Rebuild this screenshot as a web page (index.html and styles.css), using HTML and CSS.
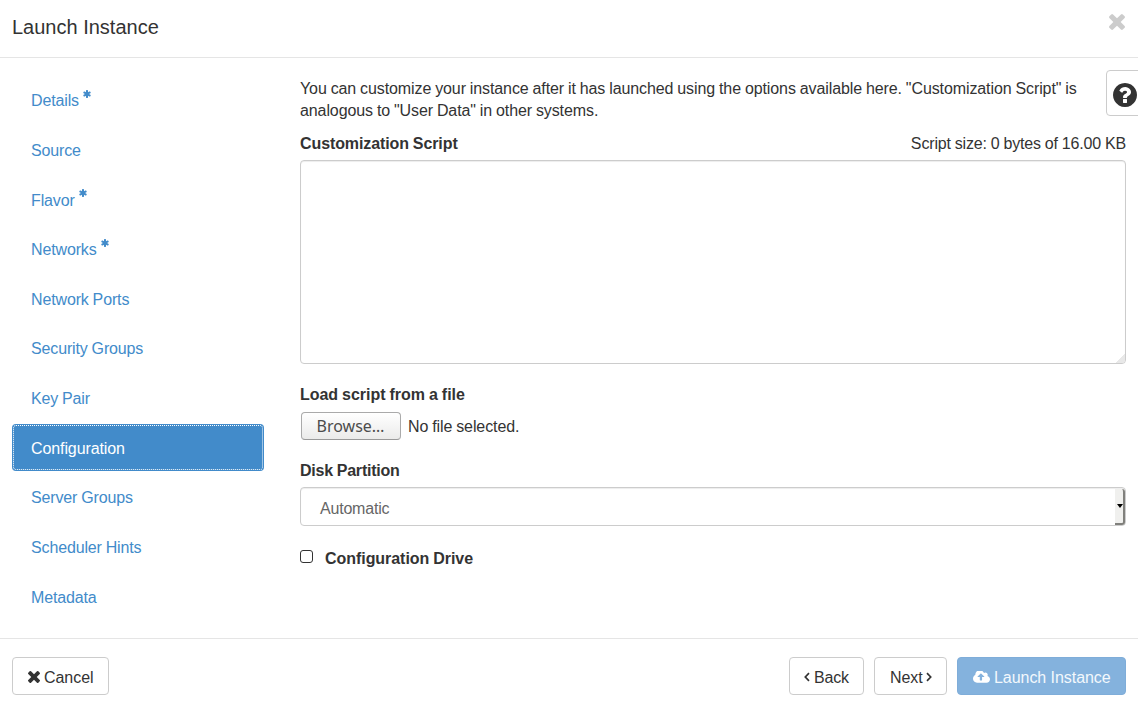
FILE: index.html
```
<!DOCTYPE html>
<html lang="en">
<head>
<meta charset="utf-8">
<title>Launch Instance</title>
<link rel="stylesheet" href="styles.css">
</head>
<body>
<svg class="sprite" aria-hidden="true">
  <symbol id="times" viewBox="110 -1170 1188 1188"><path transform="scale(1 -1)" d="M1298 214q0 -40 -28 -68l-136 -136q-28 -28 -68 -28t-68 28l-294 294l-294 -294q-28 -28 -68 -28t-68 28l-136 136q-28 28 -28 68t28 68l294 294l-294 294q-28 28 -28 68t28 68l136 136q28 28 68 28t68 -28l294 -294l294 294q28 28 68 28t68 -28l136 -136q28 -28 28 -68t-28 -68l-294 -294l294 -294q28 -28 28 -68z"/></symbol>
  <symbol id="asterisk" viewBox="106 -1408 1452 1536"><path transform="scale(1 -1)" d="M1482 486q46 -26 59.5 -77.5t-12.5 -97.5l-64 -110q-26 -46 -77.5 -59.5t-97.5 12.5l-266 153v-307q0 -52 -38 -90t-90 -38h-128q-52 0 -90 38t-38 90v307l-266 -153q-46 -26 -97.5 -12.5t-77.5 59.5l-64 110q-26 46 -12.5 97.5t59.5 77.5l266 154l-266 154q-46 26 -59.5 77.5t12.5 97.5l64 110q26 46 77.5 59.5t97.5 -12.5l266 -153v307q0 52 38 90t90 38h128q52 0 90 -38t38 -90v-307l266 153q46 26 97.5 12.5t77.5 -59.5l64 -110q26 -46 12.5 -97.5t-59.5 -77.5l-266 -154z"/></symbol>
  <symbol id="question" viewBox="0 -1408 1536 1536"><path transform="scale(1 -1)" d="M896 160v192q0 14 -9 23t-23 9h-192q-14 0 -23 -9t-9 -23v-192q0 -14 9 -23t23 -9h192q14 0 23 9t9 23zM1152 832q0 88 -55.5 163t-138.5 116t-170 41q-243 0 -371 -213q-15 -24 8 -42l132 -100q7 -6 19 -6q16 0 25 12q53 68 86 92q34 24 86 24q48 0 85.5 -26t37.5 -59q0 -38 -20 -61t-68 -45q-63 -28 -115.5 -86.5t-52.5 -125.5v-36q0 -14 9 -23t23 -9h192q14 0 23 9t9 23q0 19 21.5 49.5t54.5 49.5q32 18 49 28.5t46 35t44.5 48t28 60.5t12.5 81zM1536 640q0 -209 -103 -385.5t-279.5 -279.5t-385.5 -103t-385.5 103t-279.5 279.5t-103 385.5t103 385.5t279.5 279.5t385.5 103t385.5 -103t279.5 -279.5t103 -385.5z"/></symbol>
  <symbol id="cloud" viewBox="0 -1280 1920 1280"><path transform="scale(1 -1)" d="M1280 672q0 14 -9 23l-352 352q-9 9 -23 9t-23 -9l-351 -351q-10 -12 -10 -24q0 -14 9 -23t23 -9h224v-352q0 -13 9.500 -22.500t22.500 -9.500h192q13 0 22.500 9.500t9.500 22.500v352h224q13 0 22.500 9.500t9.500 22.500zM1920 384q0 -159 -112.500 -271.500t-271.500 -112.500h-1088q-185 0 -316.500 131.500t-131.500 316.500q0 130 70 240t188 165q-2 30 -2 43q0 212 150 362t362 150q156 0 285.500 -87t188.500 -231q71 62 166 62q106 0 181 -75t75 -181q0 -76 -41 -138q130 -31 213.500 -135.500t83.500 -238.500z"/></symbol>
</svg>
<div class="modal">
  <header class="modal-header">
    <h1 class="title">Launch Instance</h1>
    <svg class="close"><use href="#times"/></svg>
  </header>
  <div class="modal-body">
    <nav class="steps">
      <a class="step">Details<svg class="required"><use href="#asterisk"/></svg></a>
      <a class="step">Source</a>
      <a class="step">Flavor<svg class="required"><use href="#asterisk"/></svg></a>
      <a class="step">Networks<svg class="required"><use href="#asterisk"/></svg></a>
      <a class="step">Network Ports</a>
      <a class="step">Security Groups</a>
      <a class="step">Key Pair</a>
      <a class="step active">Configuration</a>
      <a class="step">Server Groups</a>
      <a class="step">Scheduler Hints</a>
      <a class="step">Metadata</a>
    </nav>
    <main class="content">
      <p class="intro">You can customize your instance after it has launched using the options available here. "Customization Script" is<br>analogous to "User Data" in other systems.</p>
      <div class="label-row"><b class="label">Customization Script</b><span class="size">Script size: 0 bytes of 16.00 KB</span></div>
      <div class="script-box"><svg class="grip" viewBox="0 0 9 9"><path d="M9 0v7L7 9H0V8h1V7h1V6h1V5h1V4h1V3h1V2h1V1h1V0z"/></svg></div>
      <b class="label load-label">Load script from a file</b>
      <div class="file-row"><span class="browse">Browse…</span><span class="file-name">No file selected.</span></div>
      <b class="label disk-label">Disk Partition</b>
      <div class="select"><span>Automatic</span><span class="select-button"><svg class="caret" viewBox="0 0 6 4"><path d="M0 0h6L3 4z"/></svg></span></div>
      <div class="check-row"><span class="checkbox"></span><b class="label">Configuration Drive</b></div>
    </main>
    <aside class="help"><svg class="help-icon"><use href="#question"/></svg></aside>
  </div>
  <footer class="modal-footer">
    <a class="btn cancel"><svg class="icon-x"><use href="#times"/></svg>Cancel</a>
    <a class="btn back"><svg class="angle" viewBox="0 0 6 10"><path d="M5 1.200 1.300 5 5 8.800"/></svg>Back</a>
    <a class="btn next">Next<svg class="angle" viewBox="0 0 6 10"><path d="M1 1.200 4.700 5 1 8.800"/></svg></a>
    <a class="btn launch"><svg class="icon-cloud"><use href="#cloud"/></svg>Launch Instance</a>
  </footer>
</div>
</body>
</html>
```
FILE: styles.css
```
* { box-sizing: border-box; }
body {
  margin: 0;
  background: #fff;
  color: #333;
  font: 16px/22px "Liberation Sans", Arial, sans-serif;
}
svg { display: block; flex: none; fill: currentColor; }
.sprite { position: absolute; width: 0; height: 0; }
.modal {
  display: grid;
  grid-template-rows: 58px 580px 63px;
  height: 701px;
  overflow: hidden;
}
.modal-header {
  display: flex;
  justify-content: space-between;
  padding: 14px 13px 0 12px;
  border-bottom: 1px solid #e5e5e5;
}
.title { margin: 0; font-size: 20px; line-height: 26px; font-weight: 400; }
.close { width: 16px; height: 16px; color: #ccc; }
.modal-body {
  display: grid;
  grid-template-columns: 252px 826px 1fr;
  padding-left: 12px;
  column-gap: 36px;
  overflow: hidden;
  letter-spacing: -.1px;
  word-spacing: -.4px;
}
.steps { display: flex; flex-direction: column; gap: 3px; padding-top: 18.500px; letter-spacing: -.14px; }
.step {
  display: flex;
  align-items: center;
  height: 46.650px;
  flex: none;
  padding: 2.800px 0 0 19px;
  border-radius: 4px;
  color: #428bca;
}
.required { width: 8px; height: 8px; margin: -15px 0 0 4px; }
.active { background: #428bca; color: #fff; letter-spacing: -.1px; outline: 1px dotted #fff; outline-offset: -2px; }
.content { display: flex; flex-direction: column; padding-top: 20px; }
.intro { margin: 0; white-space: nowrap; }
.size { letter-spacing: -.15px; }
.label { font-weight: 700; }
.label-row { display: flex; justify-content: space-between; margin-top: 11px; }
.script-box {
  display: flex;
  align-items: flex-end;
  justify-content: flex-end;
  height: 204px;
  margin-top: 5px;
  border: 1px solid #ccc;
  border-radius: 4px;
  box-shadow: inset 0 1px 1px rgba(0, 0, 0, .075);
}
.grip { width: 9px; height: 9px; fill: #e8e8e8; }
.load-label { margin-top: 20px; letter-spacing: -.03px; }
.file-row { display: flex; align-items: center; height: 28px; margin: 6px 0 0 1px; }
.browse {
  width: 100px;
  height: 28px;
  padding-right: 1px;
  border: 1px solid #aaa;
  border-bottom-color: #999;
  border-radius: 4px;
  background: linear-gradient(#fff, #ebebea);
  font: 16px/26px "Noto Sans", sans-serif;
  letter-spacing: 0;
  text-align: center;
  color: #4c4c4c;
}
.file-name { margin-left: 7px; padding-top: 2px; }
.disk-label { margin-top: 20px; letter-spacing: -.22px; }
.select {
  display: flex;
  justify-content: space-between;
  height: 39px;
  margin-top: 5px;
  padding-left: 19px;
  border: 1px solid #ccc;
  border-radius: 4px;
  box-shadow: inset 0 1px 1px rgba(0, 0, 0, .075);
  color: #666;
  line-height: 41px;
  letter-spacing: -.2px;
}
.select-button {
  display: flex;
  align-items: center;
  width: 10px;
  margin: 1px 0 0;
  padding-left: 2px;
  background: #f0f0ee;
  border-right: 2px solid #80807c;
  border-bottom: 2px solid #80807c;
  border-radius: 0 3px 3px 0;
}
.caret { width: 6px; height: 4px; fill: #000; }
.check-row { display: flex; align-items: flex-start; margin-top: 22px; letter-spacing: -.05px; }
.checkbox { width: 13px; height: 13px; margin: 2px 12px 0 0; border: 1px solid #333; border-radius: 3px; }
.help {
  width: 48px;
  height: 46px;
  margin: 12px 0 0 -56px;
  padding: 12px 0 0 6px;
  border: 1px solid #ccc;
  border-radius: 4px;
  background: #fff;
}
.help-icon { width: 24px; height: 24px; }
.modal-footer { display: flex; padding: 18px 12px 0; border-top: 1px solid #e5e5e5; }
.btn {
  display: flex;
  align-items: center;
  height: 38px;
  padding-top: 3px;
  border: 1px solid #ccc;
  border-radius: 4px;
  white-space: nowrap;
  letter-spacing: -.05px;
}
.btn svg { margin-top: -1px; }
.cancel { width: 97px; margin-right: auto; padding-left: 15px; }
.icon-x { width: 12px; height: 12px; margin: 0 4px 0 0; }
.angle { width: 6px; height: 10px; fill: none; stroke: currentColor; stroke-width: 1.700; }
.back { width: 75px; margin-right: 10px; padding-left: 14px; letter-spacing: -.2px; }
.back .angle { margin-right: 4px; }
.next { width: 73px; margin-right: 10px; padding-left: 15px; }
.next .angle { margin-left: 3px; }
.launch { width: 169px; padding-left: 15px; border-color: #7fadd9; background: #84b2dd; color: #f3f8fc; }
.icon-cloud { width: 17px; height: 12px; margin-right: 4px; fill: #fff; }
```
